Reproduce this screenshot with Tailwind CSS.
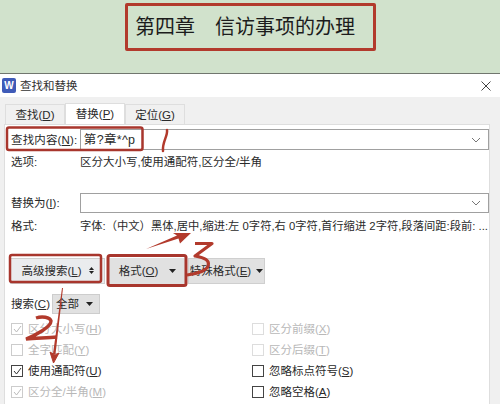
<!DOCTYPE html>
<html>
<head>
<meta charset="utf-8">
<script src="https://cdn.jsdelivr.net/npm/@tailwindcss/browser@4"></script>
</head>
<body class="m-0">
<div class="relative w-[500px] h-[404px] overflow-hidden bg-[#f0f0f0] text-[11.5px] leading-[14px] text-[#2a2a2a] whitespace-nowrap font-['Liberation_Sans','Noto_Sans_CJK_SC',sans-serif]">
  <header class="h-[74px] bg-[#d1e2cc] border-b border-[#70766e] flex items-start pl-[125px] pt-[3px]">
    <div class="w-[251px] h-[48px] border-[3px] border-[#b23a2c] rounded-[2px] flex items-center pl-[7px] text-[20px] leading-[26px] text-[#1c1c1c] whitespace-pre">第四章　信访事项的办理</div>
  </header>

  <div class="h-[23px] bg-white flex items-center pl-[2px] pr-[9px]">
    <div class="w-[14px] h-[15px] bg-[#3f5bb8] rounded-[2px] text-white text-[10px] font-bold flex items-center justify-center">W</div>
    <span class="ml-[4px] text-[#333]">查找和替换</span>
    <svg class="ml-auto" width="10" height="10" viewBox="0 0 10 10"><path d="M0.5 0.5l9 9M9.5 0.5l-9 9" stroke="#444" stroke-width="1" fill="none"/></svg>
  </div>

  <nav class="h-[27px] flex items-end pl-[5px]">
    <div class="w-[60px] h-[20px] border border-[#dedede] border-b-0 flex items-center justify-center"><span>查找(<u>D</u>)</span></div>
    <div class="w-[60px] h-[21px] bg-white border border-[#dedede] border-b-0 flex items-center justify-center"><span>替换(<u>P</u>)</span></div>
    <div class="w-[60px] h-[20px] border border-[#dedede] border-b-0 flex items-center justify-center"><span>定位(<u>G</u>)</span></div>
  </nav>

  <main class="h-[280px] ml-[4px] w-[486px] bg-white border-l border-t border-r border-[#dedede] pl-[6px] pr-[0px] flex flex-col">
    <div class="mt-[4px] h-[21px] flex items-center">
      <span class="w-[69px] tracking-[0.15px]">查找内容(<u>N</u>):</span>
      <div class="w-[410px] h-[21px] border border-[#a0a0a0] flex items-center justify-between pl-[3px] pr-[7px]">
        <span class="text-[12.5px] tracking-[0.3px]">第?章*^p</span>
        <svg width="10" height="6" viewBox="0 0 10 6"><path d="M1 1l4 4 4-4" stroke="#777" fill="none"/></svg>
      </div>
    </div>
    <div class="mt-[5px] h-[14px] flex">
      <span class="w-[69px]">选项:</span><span>区分大小写,使用通配符,区分全/半角</span>
    </div>
    <div class="mt-[24px] h-[20px] flex items-center">
      <span class="w-[69px]">替换为(<u>I</u>):</span>
      <div class="w-[410px] h-[20px] border border-[#a0a0a0] flex items-center justify-end pr-[7px]">
        <svg width="10" height="6" viewBox="0 0 10 6"><path d="M1 1l4 4 4-4" stroke="#777" fill="none"/></svg>
      </div>
    </div>
    <div class="mt-[6px] h-[14px] flex">
      <span class="w-[69px]">格式:</span><span class="text-[11.3px]">字体:（中文）黑体,居中,缩进:左 0字符,右 0字符,首行缩进 2字符,段落间距:段前: ...</span>
    </div>
    <div class="mt-[24px] h-[27px] flex items-center">
      <div class="w-[95px] h-[26px] bg-[#eaecee] border border-[#cfcfcf] flex items-center justify-center gap-[7px] -ml-[1px]"><span>高级搜索(<u>L</u>)</span><span class="flex flex-col gap-[1px]"><svg class="block" width="5" height="3"><path d="M0 3h5L2.5 0z" fill="#222"/></svg><svg class="block" width="5" height="3"><path d="M0 0h5L2.5 3z" fill="#222"/></svg></span></div>
      <div class="ml-[3px] w-[79px] h-[26px] bg-[#e1e1e1] flex items-center justify-center gap-[11px]"><span>格式(<u>O</u>)</span><svg width="7" height="4"><path d="M0 0h7L3.5 4z" fill="#222"/></svg></div>
      <div class="ml-[1px] w-[77px] h-[26px] bg-[#e1e1e1] border border-[#cfcfcf] flex items-center justify-center gap-[5px]"><span>特殊格式(<u>E</u>)</span><svg width="7" height="4"><path d="M0 0h7L3.5 4z" fill="#222"/></svg></div>
    </div>
    <div class="mt-[10px] h-[20px] flex items-center">
      <span class="w-[41px]">搜索(<u>C</u>)</span>
      <div class="w-[48px] h-[20px] bg-[#e1e1e1] border border-[#cdcdcd] flex items-center justify-between pl-[3px] pr-[6px]"><span>全部</span><svg width="7" height="4"><path d="M0 0h7L3.5 4z" fill="#222"/></svg></div>
    </div>
    <div class="mt-[4px] grid grid-cols-[241px_1fr] auto-rows-[21px] items-center text-[#b8b8b8]">
      <div class="flex items-center gap-[5px]"><span class="w-[12px] h-[12px] border border-[#ccc] flex items-center justify-center"><svg width="9" height="8" viewBox="0 0 9 8"><path d="M1 4l2.5 3L8 1" stroke="#bbb" fill="none"/></svg></span><span>区分大小写(<u>H</u>)</span></div>
      <div class="flex items-center gap-[5px]"><span class="w-[12px] h-[12px] border border-[#ddd]"></span><span>区分前缀(<u>X</u>)</span></div>
      <div class="flex items-center gap-[5px]"><span class="w-[12px] h-[12px] border border-[#ccc]"></span><span>全字匹配(<u>Y</u>)</span></div>
      <div class="flex items-center gap-[5px]"><span class="w-[12px] h-[12px] border border-[#ddd]"></span><span>区分后缀(<u>T</u>)</span></div>
      <div class="flex items-center gap-[5px] text-[#2a2a2a]"><span class="w-[12px] h-[12px] border border-[#444] flex items-center justify-center"><svg width="9" height="8" viewBox="0 0 9 8"><path d="M1 4l2.5 3L8 1" stroke="#333" fill="none"/></svg></span><span>使用通配符(<u>U</u>)</span></div>
      <div class="flex items-center gap-[5px] text-[#2a2a2a]"><span class="w-[12px] h-[12px] border border-[#444]"></span><span>忽略标点符号(<u>S</u>)</span></div>
      <div class="flex items-center gap-[5px]"><span class="w-[12px] h-[12px] border border-[#ccc] flex items-center justify-center"><svg width="9" height="8" viewBox="0 0 9 8"><path d="M1 4l2.5 3L8 1" stroke="#bbb" fill="none"/></svg></span><span>区分全/半角(<u>M</u>)</span></div>
      <div class="flex items-center gap-[5px] text-[#2a2a2a]"><span class="w-[12px] h-[12px] border border-[#444]"></span><span>忽略空格(<u>A</u>)</span></div>
    </div>
  </main>

  <svg class="absolute left-0 top-0 pointer-events-none" width="500" height="404" viewBox="0 0 500 404" fill="none">
    <rect x="7" y="127.5" width="135.5" height="22.5" rx="2" stroke="#a8362d" stroke-width="2.5"/>
    <rect x="10" y="255" width="91" height="27" rx="2" stroke="#a8362d" stroke-width="2.5"/>
    <rect x="108" y="255.5" width="78" height="30" rx="2" stroke="#a8362d" stroke-width="3"/>
    <path d="M167 130C168 136 162 142 163 151" stroke="#b23a2c" stroke-width="2.5" stroke-linecap="round"/>
    <path d="M146 249L177 235.5L173 233L191 233L180 243.5L178.5 238.5Z" fill="#b23a2c"/>
    <path d="M195 243.5H212L195 256C205 258 210 260 208 266C206 271 196 274 187 275" stroke="#b23a2c" stroke-width="3.2" stroke-linejoin="round"/>
    <path d="M36 318C42 316 50 317 51 321C51 327 36 335 26 339C36 338 46 338 57 337" stroke="#b23a2c" stroke-width="3.4"/>
    <path d="M62 288L63 288L55.5 354L53 354Z" fill="#b23a2c"/>
    <path d="M50 352L53.5 363L59 353L55 355Z" fill="#b23a2c" stroke="#b23a2c"/>
  </svg>
</div>
</body>
</html>
